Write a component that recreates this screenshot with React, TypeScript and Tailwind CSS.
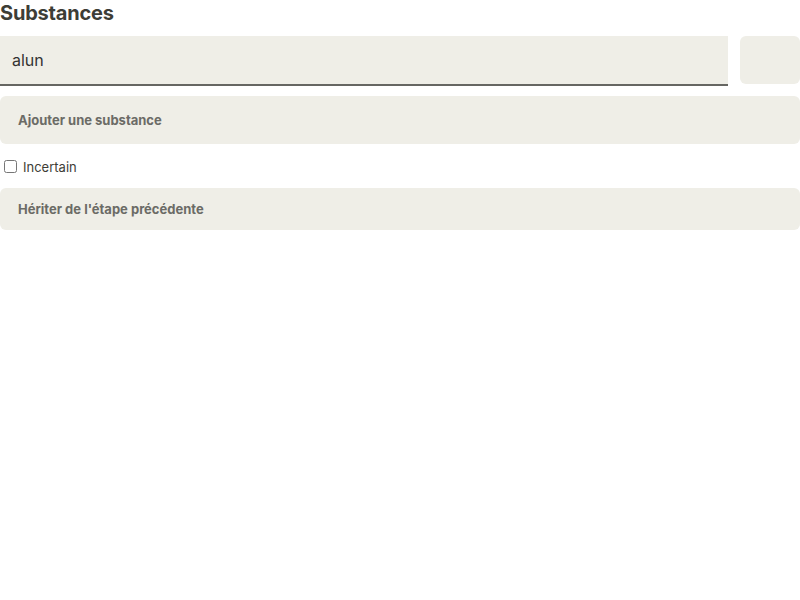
import React, { useState } from 'react'

export default function App() {
  const [value, setValue] = useState('alun')
  const [uncertain, setUncertain] = useState(false)

  return (
    <div className="w-[800px] bg-white font-['Inter',sans-serif] text-[#3d3d36]">
      <h2 className="text-[20px] font-bold leading-[26px] tracking-[-0.2px]">Substances</h2>

      <div className="mt-[10px] flex items-start gap-3">
        <input
          value={value}
          onChange={e => setValue(e.target.value)}
          className="h-[50px] flex-1 border-b-2 border-[#666662] bg-[#efeee7] px-3 text-[16px] text-[#333] outline-none"
        />
        <button className="h-[48px] w-[60px] rounded-md bg-[#efeee7]" />
      </div>

      <button className="mt-[10px] flex h-[48px] w-full items-center rounded-md bg-[#efeee7] px-[18px] pt-[2px] text-[13px] font-bold text-[#6b6b66]">
        Ajouter une substance
      </button>

      <label className="mt-[14px] flex items-center gap-[6px] pl-1 text-[13px] text-[#3d3d36]">
        <input
          type="checkbox"
          checked={uncertain}
          onChange={e => setUncertain(e.target.checked)}
          className="m-0 -mt-[2px] h-[13px] w-[13px]"
        />
        Incertain
      </label>

      <button className="mt-[10px] flex h-[42px] w-full items-center rounded-md bg-[#efeee7] px-[18px] pt-[2px] text-[13px] font-bold text-[#6b6b66]">
        Hériter de l'étape précédente
      </button>
    </div>
  )
}
